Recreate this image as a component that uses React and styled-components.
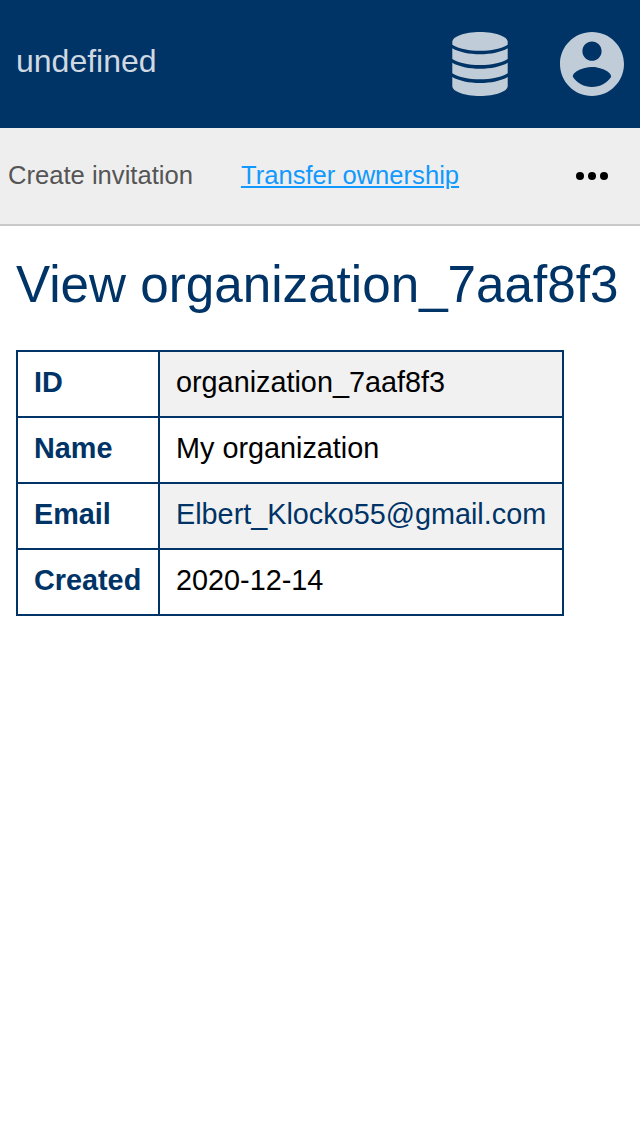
import React from "react";
import styled, { createGlobalStyle } from "styled-components";

const GlobalStyle = createGlobalStyle`
  * { box-sizing: border-box; }
  body {
    margin: 0;
    background: #fff;
    font-family: "Liberation Sans", Arial, sans-serif;
  }
`;

const Header = styled.header`
  display: flex;
  align-items: center;
  height: 128px;
  padding: 0 16px;
  background: #003366;
  color: #c0ccd8;
`;

const Brand = styled.div`
  flex: 1;
  padding-bottom: 6px;
  font-size: 32px;
  line-height: 40px;
  color: #d0d9e1;
`;

const HeaderIcons = styled.div`
  display: flex;
  gap: 52px;

  svg { display: block; fill: currentColor; }
`;

const Toolbar = styled.nav`
  display: flex;
  align-items: center;
  height: 98px;
  padding: 0 32px 0 8px;
  background: #eeeeee;
  border-bottom: 2px solid #c8c8c8;
`;

const ToolbarLink = styled.a`
  margin-right: 48px;
  padding-bottom: 2px;
  font-size: 25.6px;
  line-height: 30px;
  color: ${(p) => (p.$active ? "#1199ff" : "#555555")};
  text-decoration: ${(p) => (p.$active ? "underline" : "none")};
`;

const MoreButton = styled.button`
  margin-left: auto;
  padding: 0;
  border: 0;
  background: none;

  svg { display: block; }
`;

const Main = styled.main`
  padding: 29px 16px;
`;

const Title = styled.h1`
  margin: 0 0 36px;
  font-size: 51.2px;
  font-weight: 400;
  line-height: 59px;
  color: #003366;
  white-space: nowrap;
`;

const Table = styled.table`
  border-collapse: collapse;
  font-size: 28.8px;
  line-height: 32px;
`;

const Row = styled.tr`
  &:nth-child(odd) td { background: #f1f1f1; }
`;

const Label = styled.th`
  min-width: 142px;
  padding: 14px 16px 18px;
  border: 2px solid #003366;
  color: #003366;
  text-align: left;
`;

const Value = styled.td`
  padding: 14px 16px 18px;
  border: 2px solid #003366;
  color: ${(p) => (p.$link ? "#003366" : "#000")};
`;

const rows = [
  { label: "ID", value: "organization_7aaf8f3" },
  { label: "Name", value: "My organization" },
  { label: "Email", value: "Elbert_Klocko55@gmail.com", link: true },
  { label: "Created", value: "2020-12-14" },
];

const DatabaseIcon = () => (
  <svg width="56" height="64" viewBox="0 0 56 64">
    <path d="M0.3 10C0.3 4.5 12.5 0 28 0S55.7 4.5 55.7 10V12.8C49 17 39 18.8 28 18.8S7 17 0.3 12.8Z" />
    <path d="M0.3 16.3C7 20.2 17 22.3 28 22.3S49 20.2 55.7 16.3V27C49 31 39 33 28 33S7 31 0.3 27Z" />
    <path d="M0.3 30.7C7 34.6 17 36.7 28 36.7S49 34.6 55.7 30.7V41.3C49 45.3 39 47.3 28 47.3S7 45.3 0.3 41.3Z" />
    <path d="M0.3 45.1C7 49 17 51.1 28 51.1S49 49 55.7 45.1V54C55.7 59.5 43.5 64 28 64S0.3 59.5 0.3 54Z" />
  </svg>
);

const AccountIcon = () => (
  <svg width="64" height="64" viewBox="2 2 20 20">
    <path d="M12 2C6.48 2 2 6.48 2 12s4.48 10 10 10 10-4.48 10-10S17.52 2 12 2zm0 3c1.66 0 3 1.34 3 3s-1.34 3-3 3-3-1.34-3-3 1.34-3 3-3zm0 14.2c-2.5 0-4.71-1.28-6-3.22.03-1.99 4-3.08 6-3.08 1.99 0 5.97 1.09 6 3.08-1.29 1.94-3.5 3.22-6 3.22z" />
  </svg>
);

export default function App() {
  return (
    <>
      <GlobalStyle />
      <Header>
        <Brand>undefined</Brand>
        <HeaderIcons>
          <DatabaseIcon />
          <AccountIcon />
        </HeaderIcons>
      </Header>
      <Toolbar>
        <ToolbarLink>Create invitation</ToolbarLink>
        <ToolbarLink $active>Transfer ownership</ToolbarLink>
        <MoreButton aria-label="More">
          <svg width="32" height="8" viewBox="0 0 32 8">
            <circle cx="4" cy="4" r="4" />
            <circle cx="16" cy="4" r="4" />
            <circle cx="28" cy="4" r="4" />
          </svg>
        </MoreButton>
      </Toolbar>
      <Main>
        <Title>View organization_7aaf8f3</Title>
        <Table>
          <tbody>
            {rows.map((row) => (
              <Row key={row.label}>
                <Label>{row.label}</Label>
                <Value $link={row.link}>{row.value}</Value>
              </Row>
            ))}
          </tbody>
        </Table>
      </Main>
    </>
  );
}
